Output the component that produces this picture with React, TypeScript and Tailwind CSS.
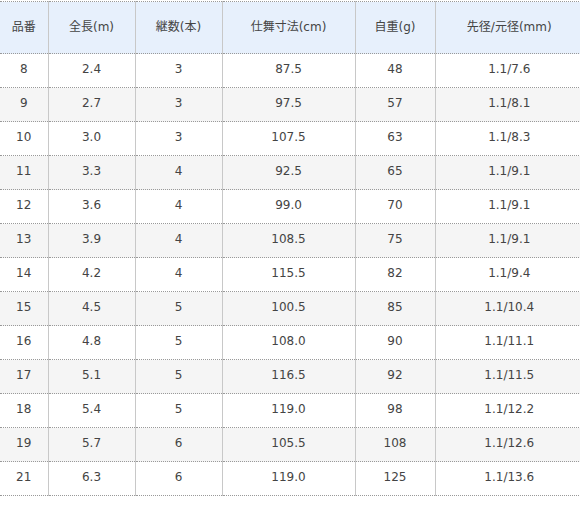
const headers = ["品番", "全長(m)", "継数(本)", "仕舞寸法(cm)", "自重(g)", "先径/元径(mm)"];

const rows: string[][] = [
  ["8", "2.4", "3", "87.5", "48", "1.1/7.6"],
  ["9", "2.7", "3", "97.5", "57", "1.1/8.1"],
  ["10", "3.0", "3", "107.5", "63", "1.1/8.3"],
  ["11", "3.3", "4", "92.5", "65", "1.1/9.1"],
  ["12", "3.6", "4", "99.0", "70", "1.1/9.1"],
  ["13", "3.9", "4", "108.5", "75", "1.1/9.1"],
  ["14", "4.2", "4", "115.5", "82", "1.1/9.4"],
  ["15", "4.5", "5", "100.5", "85", "1.1/10.4"],
  ["16", "4.8", "5", "108.0", "90", "1.1/11.1"],
  ["17", "5.1", "5", "116.5", "92", "1.1/11.5"],
  ["18", "5.4", "5", "119.0", "98", "1.1/12.2"],
  ["19", "5.7", "6", "105.5", "108", "1.1/12.6"],
  ["21", "6.3", "6", "119.0", "125", "1.1/13.6"],
];

const widths = ["w-[48px]", "w-[87px]", "w-[87px]", "w-[133px]", "w-[80px]", "w-[148px]"];

export default function App() {
  return (
    <div className="w-[580px] h-[520px] overflow-hidden bg-white pt-px">
      <table
        className="w-[583px] table-fixed border-collapse text-[12px] text-[#444]"
        style={{ fontFamily: '"DejaVu Sans", "Noto Sans CJK JP", sans-serif' }}
      >
        <thead>
          <tr className="h-[52px] bg-[#e7f0fc]">
            {headers.map((h, i) => (
              <th
                key={h}
                className={`${widths[i]} pb-[2px] font-normal text-center border-t border-b border-dotted border-t-[#999] border-b-[#999] ${i > 0 ? "border-l border-l-[#c8c8c8]" : ""}`}
                style={i > 0 ? { borderLeftStyle: "solid" } : undefined}
              >
                {h}
              </th>
            ))}
          </tr>
        </thead>
        <tbody>
          {rows.map((r, ri) => (
            <tr key={ri} className={`h-[34px] ${ri % 2 === 1 ? "bg-[#f5f5f5]" : "bg-white"}`}>
              {r.map((c, ci) => (
                <td
                  key={ci}
                  className={`pb-[3px] text-center border-b border-dotted border-b-[#999] ${ci > 0 ? "border-l border-l-[#c8c8c8]" : ""}`}
                  style={ci > 0 ? { borderLeftStyle: "solid" } : undefined}
                >
                  {c}
                </td>
              ))}
            </tr>
          ))}
        </tbody>
      </table>
    </div>
  );
}
